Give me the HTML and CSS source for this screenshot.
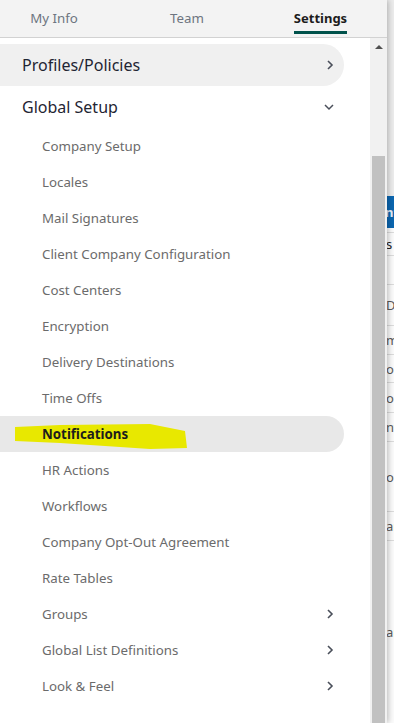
FILE: index.html
```html
<!DOCTYPE html>
<html lang="en">
<head>
    <meta charset="UTF-8">
    <meta name="viewport" content="width=device-width, initial-scale=1.0">
    <title>Settings</title>
    <link rel="stylesheet" href="styles.css">
</head>
<body>
    <div class="screen">
        <aside class="panel">
            <nav class="tabs">
                <a class="tab"><span>My Info</span></a>
                <a class="tab"><span>Team</span></a>
                <a class="tab active"><span>Settings</span></a>
            </nav>
            <div class="panel-body">
                <ul class="menu">
                    <li class="menu-item section shaded">
                        <span>Profiles/Policies</span>
                        <svg class="chevron" width="8" height="12" viewBox="0 0 8 12"><path d="M2 2 L6 6 L2 10" fill="none" stroke="#4a4f5a" stroke-width="1.6"/></svg>
                    </li>
                    <li class="menu-item section">
                        <span>Global Setup</span>
                        <svg class="chevron" width="10" height="8" viewBox="0 0 10 8"><path d="M1 2 L5 6 L9 2" fill="none" stroke="#4a4f5a" stroke-width="1.5"/></svg>
                    </li>
                    <li class="menu-item sub">Company Setup</li>
                    <li class="menu-item sub">Locales</li>
                    <li class="menu-item sub">Mail Signatures</li>
                    <li class="menu-item sub">Client Company Configuration</li>
                    <li class="menu-item sub">Cost Centers</li>
                    <li class="menu-item sub">Encryption</li>
                    <li class="menu-item sub">Delivery Destinations</li>
                    <li class="menu-item sub">Time Offs</li>
                    <li class="menu-item sub selected">
                        <svg class="marker" width="200" height="36" viewBox="0 0 200 36"><polygon points="15,11 60,9 150,8 185,15 187,32 150,33 60,27 15,25" fill="#e8e800"/></svg>
                        <span class="label">Notifications</span>
                    </li>
                    <li class="menu-item sub">HR Actions</li>
                    <li class="menu-item sub">Workflows</li>
                    <li class="menu-item sub">Company Opt-Out Agreement</li>
                    <li class="menu-item sub">Rate Tables</li>
                    <li class="menu-item sub">
                        <span>Groups</span>
                        <svg class="chevron" width="8" height="12" viewBox="0 0 8 12"><path d="M2 2 L6 6 L2 10" fill="none" stroke="#4a4f5a" stroke-width="1.6"/></svg>
                    </li>
                    <li class="menu-item sub">
                        <span>Global List Definitions</span>
                        <svg class="chevron" width="8" height="12" viewBox="0 0 8 12"><path d="M2 2 L6 6 L2 10" fill="none" stroke="#4a4f5a" stroke-width="1.6"/></svg>
                    </li>
                    <li class="menu-item sub">
                        <span>Look &amp; Feel</span>
                        <svg class="chevron" width="8" height="12" viewBox="0 0 8 12"><path d="M2 2 L6 6 L2 10" fill="none" stroke="#4a4f5a" stroke-width="1.6"/></svg>
                    </li>
                </ul>
                <div class="scrollbar">
                    <div class="scroll-button"><span class="scroll-arrow"></span></div>
                    <div class="scroll-thumb"></div>
                </div>
            </div>
        </aside>
        <div class="backdrop">
            <div class="bd-top"></div>
            <div class="bd-head">nt</div>
            <div class="bd-row h5"></div>
            <div class="bd-row h23 dark">s</div>
            <div class="bd-row h29"></div>
            <div class="bd-row h41">D</div>
            <div class="bd-row h29">m</div>
            <div class="bd-row h28">or</div>
            <div class="bd-row h30">or</div>
            <div class="bd-row h29">nt</div>
            <div class="bd-row h70">or</div>
            <div class="bd-row h29">ar</div>
            <div class="bd-row rest">ar</div>
        </div>
    </div>
</body>
</html>
```

FILE: styles.css
```css
body {
    margin: 0;
    font-family: "Noto Sans", "Open Sans", Arial, sans-serif;
    background-color: #fff;
    overflow: hidden;
}

.screen {
    display: flex;
    width: 394px;
    height: 723px;
    overflow: hidden;
}

.panel {
    width: 387px;
    flex-shrink: 0;
    display: flex;
    flex-direction: column;
    background-color: #fff;
    position: relative;
    z-index: 1;
    box-shadow: 1px 0 6px rgba(0, 0, 0, 0.28);
}

/* tabs on top */
.tabs {
    display: grid;
    grid-template-columns: 108px 158px 109px;
    height: 37px;
    background-color: #f3f3f3;
    border-bottom: 1px solid #d2d2d2;
}

.tab {
    display: flex;
    justify-content: center;
    font-size: 13.3px;
    color: #6d7580;
    cursor: pointer;
}

.tab span {
    display: block;
    padding-top: 9px;
    line-height: 19px;
    height: 25px;
    box-sizing: content-box;
}

.tab.active span {
    font-weight: bold;
    font-size: 13px;
    color: #1c1c1c;
    border-bottom: 3px solid #00524b;
    height: 22px;
    padding-top: 9px;
}

.panel-body {
    flex: 1;
    display: flex;
    min-height: 0;
}

.menu {
    flex: 1;
    list-style: none;
    margin: 0;
    padding: 6px 26px 0 0;
    overflow: hidden;
}

.menu-item {
    display: flex;
    align-items: center;
    justify-content: space-between;
    position: relative;
    padding-right: 10px;
    white-space: nowrap;
}

.section {
    height: 42px;
    padding-left: 22px;
    font-size: 16px;
    color: #1f2533;
    border-radius: 0 21px 21px 0;
}

.shaded {
    background-color: #f0f0f0;
}

.sub {
    height: 36px;
    padding-left: 42px;
    font-size: 13.3px;
    color: #6b6b6b;
}

.selected {
    background-color: #e8e8e8;
    border-radius: 0 18px 18px 0;
    font-weight: bold;
    color: #1c1c1c;
}

.marker {
    position: absolute;
    left: 0;
    top: 0;
}

.selected .label {
    position: relative;
}

.chevron {
    display: block;
}

/* fake scrollbar */
.scrollbar {
    width: 17px;
    flex-shrink: 0;
    background-color: #f1f1f1;
    display: flex;
    flex-direction: column;
}

.scroll-button {
    height: 18px;
    display: flex;
    align-items: center;
    justify-content: center;
}

.scroll-arrow {
    width: 0;
    height: 0;
    border-left: 4px solid transparent;
    border-right: 4px solid transparent;
    border-bottom: 4px solid #505050;
}

.scroll-thumb {
    flex: 1;
    margin: 100px 2px 0 2px;
    background-color: #c1c1c1;
}

/* page behind the panel */
.backdrop {
    flex: 1;
    display: flex;
    flex-direction: column;
    background-color: #fbfbfb;
    font-size: 13px;
    color: #5a5a5a;
    overflow: hidden;
}

.bd-top {
    height: 196px;
    flex-shrink: 0;
    background-color: #ececec;
}

.bd-head {
    height: 32px;
    flex-shrink: 0;
    background-color: #0b66b0;
    color: #e6eef8;
    font-weight: bold;
    display: flex;
    align-items: center;
    margin-left: -2px;
}

.bd-row {
    flex-shrink: 0;
    box-sizing: border-box;
    border-bottom: 1px solid #dcdcdc;
    display: flex;
    align-items: center;
    margin-left: -1px;
    white-space: nowrap;
}

.bd-row.dark {
    color: #222;
}

.h5 { height: 5px; }
.h23 { height: 23px; }
.h28 { height: 28px; }
.h29 { height: 29px; }
.h30 { height: 30px; }
.h41 { height: 41px; }
.h70 { height: 70px; }

.rest {
    flex: 1;
    border-bottom: none;
}
```
